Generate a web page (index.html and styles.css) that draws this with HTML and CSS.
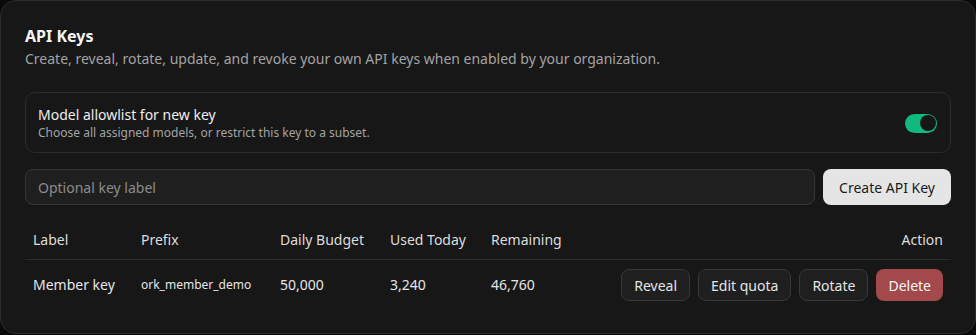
FILE: index.html
```html
<!DOCTYPE html>
<html lang="en">
<head>
<meta charset="utf-8">
<title>API Keys</title>
<link rel="stylesheet" href="styles.css">
</head>
<body>
<section class="card">
  <h2 class="title">API Keys</h2>
  <p class="subtitle">Create, reveal, rotate, update, and revoke your own API keys when enabled by your organization.</p>

  <div class="allow">
    <div class="allow-text">
      <div class="allow-label">Model allowlist for new key</div>
      <div class="allow-desc">Choose all assigned models, or restrict this key to a subset.</div>
    </div>
    <span class="toggle" role="switch" aria-checked="true"><span class="knob"></span></span>
  </div>

  <div class="create-row">
    <input class="key-input" type="text" placeholder="Optional key label">
    <button class="btn-primary" type="button">Create API Key</button>
  </div>

  <table class="keys">
    <colgroup>
      <col class="c-label"><col class="c-prefix"><col class="c-budget"><col class="c-used"><col class="c-rem"><col>
    </colgroup>
    <thead>
      <tr>
        <th>Label</th><th>Prefix</th><th>Daily Budget</th><th>Used Today</th><th>Remaining</th><th class="right">Action</th>
      </tr>
    </thead>
    <tbody>
      <tr>
        <td>Member key</td>
        <td class="prefix">ork_member_demo</td>
        <td>50,000</td>
        <td>3,240</td>
        <td>46,760</td>
        <td class="right">
          <div class="actions">
            <button class="btn" type="button">Reveal</button>
            <button class="btn" type="button">Edit quota</button>
            <button class="btn" type="button">Rotate</button>
            <button class="btn btn-danger" type="button">Delete</button>
          </div>
        </td>
      </tr>
    </tbody>
  </table>
</section>
</body>
</html>
```
FILE: styles.css
```css
* { box-sizing: border-box; }
html, body { margin: 0; padding: 0; }
body {
  background: #0a0a0a;
  font-family: "Noto Sans", "Open Sans", "Liberation Sans", sans-serif;
  color: #e5e5e5;
  width: 976px;
  height: 335px;
  overflow: hidden;
}
.card {
  height: 334px;
  background: #171717;
  border: 1px solid #2c2c2c;
  border-radius: 16px;
  padding: 23px 24px 24px;
}
.title {
  margin: 0;
  font-size: 16px;
  line-height: 24px;
  font-weight: 700;
  color: #f5f5f5;
}
.subtitle {
  margin: 0;
  font-size: 14px;
  line-height: 22px;
  color: #a3a3a3;
}
.allow {
  margin-top: 22px;
  border: 1px solid #2c2c2c;
  border-radius: 10px;
  padding: 12px 12px 11px;
  display: flex;
  align-items: center;
  justify-content: space-between;
}
.allow-label {
  font-size: 14px;
  line-height: 20px;
  color: #ededed;
}
.allow-desc {
  font-size: 12px;
  line-height: 16px;
  color: #a3a3a3;
}
.toggle {
  width: 32px;
  height: 19px;
  border-radius: 10px;
  background: #10b981;
  display: flex;
  align-items: center;
  justify-content: flex-end;
  padding: 0 1px;
  margin-right: 1px;
}
.knob {
  width: 16px;
  height: 16px;
  border-radius: 50%;
  background: #171717;
}
.create-row {
  margin-top: 16px;
  display: flex;
  gap: 8px;
}
.key-input {
  flex: 1;
  height: 36px;
  background: #1f1f1f;
  border: 1px solid #363636;
  border-radius: 8px;
  padding: 0 12px;
  font-family: inherit;
  font-size: 14px;
  color: #e5e5e5;
  outline: none;
}
.key-input::placeholder { color: #8c8c8c; }
.btn-primary {
  width: 128px;
  height: 36px;
  background: #e5e5e5;
  color: #1a1a1a;
  border: none;
  border-radius: 8px;
  font-family: inherit;
  font-size: 14px;
}
.keys {
  margin-top: 16px;
  width: 100%;
  border-collapse: collapse;
  table-layout: fixed;
  font-size: 14px;
}
.c-label { width: 108px; }
.c-prefix { width: 139px; }
.c-budget { width: 110px; }
.c-used { width: 101px; }
.c-rem { width: 110px; }
.keys th {
  text-align: left;
  font-weight: 400;
  color: #dcdcdc;
  padding: 9px 8px 9px;
  line-height: 20px;
  border-bottom: 1px solid #2c2c2c;
}
.keys td {
  padding: 9px 8px 8px;
  line-height: 20px;
  color: #e5e5e5;
  white-space: nowrap;
}
.keys .right { text-align: right; }
.keys .prefix { font-size: 12px; }
.actions {
  display: flex;
  justify-content: flex-end;
  gap: 8px;
}
.btn {
  height: 32px;
  padding: 0 12px;
  background: #1f1f1f;
  border: 1px solid #383838;
  border-radius: 8px;
  color: #e5e5e5;
  font-family: inherit;
  font-size: 14px;
}
.btn-danger {
  background: #a3484b;
  border: none;
  color: #f5f5f5;
}
```
